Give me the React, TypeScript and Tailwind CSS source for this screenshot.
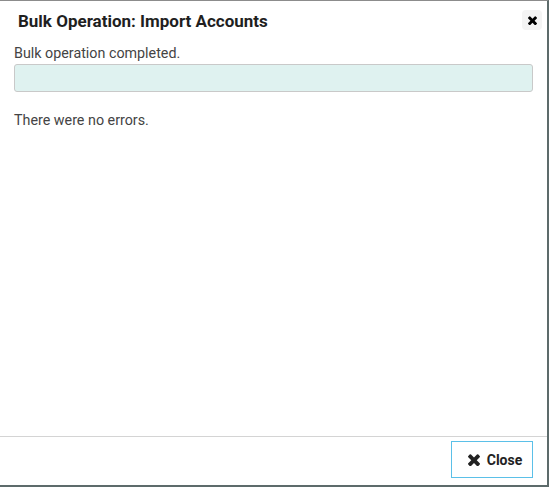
import React from 'react';

function TimesIcon({ className }: { className?: string }) {
  return (
    <svg viewBox="110 340 1188 1188" className={className} fill="currentColor">
      <path d="M1298 1322q0 40-28 68l-136 136q-28 28-68 28t-68-28l-294-294-294 294q-28 28-68 28t-68-28l-136-136q-28-28-28-68t28-68l294-294-294-294q-28-28-28-68t28-68l136-136q28-28 68-28t68 28l294 294 294-294q28-28 68-28t68 28l136 136q28 28 28 68t-28 68l-294 294 294 294q28 28 28 68z" />
    </svg>
  );
}

export default function App() {
  return (
    <div className="w-[549px] h-[487px] bg-white border-t border-t-[#8c8c8c] border-r-2 border-r-[#5d6b6b] border-b-2 border-b-[#5d6b6b] flex flex-col font-['Roboto',sans-serif] text-[#333]">
      <div className="flex items-start justify-between pl-[18px] pr-[5px] pt-[10px]">
        <h3 className="text-[17px] leading-5 font-bold text-[#1f1f1f]">Bulk Operation: Import Accounts</h3>
        <button className="w-5 h-5 mt-[-1px] rounded-sm bg-[#f4f4f4] flex items-center justify-center text-black">
          <TimesIcon className="w-[9px] h-[9px]" />
        </button>
      </div>

      <div className="flex-1 px-[14px] pt-[12px]">
        <p className="text-[14.3px] leading-5 text-[#444]">Bulk operation completed.</p>
        <div className="mt-px h-7 rounded-[3px] border border-[#c9c9c9] bg-[#dff2f0]" />
        <p className="mt-[18px] text-[14.3px] leading-5 text-[#444]">There were no errors.</p>
      </div>

      <div className="border-t border-[#d4d4d4] h-[49px] flex justify-end items-start pt-1 pr-[14px]">
        <button className="w-[82px] h-[37px] pl-[6px] border border-[#5bc0e8] bg-white flex items-center justify-center gap-[7px] text-sm font-bold text-[#222]">
          <TimesIcon className="w-3 h-3" />
          Close
        </button>
      </div>
    </div>
  );
}
